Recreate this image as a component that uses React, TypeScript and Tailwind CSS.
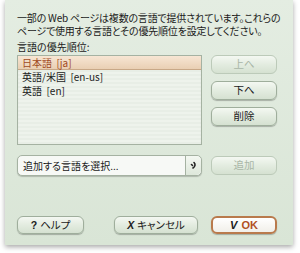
const jp = "font-['Lucida_Grande','Noto_Sans_CJK_JP',sans-serif] [font-feature-settings:'palt']";

const Btn = ({ label, disabled = false, w = "w-[66px]" }: { label: string; disabled?: boolean; w?: string }) => (
  <button
    className={`${w} h-[19px] rounded-[6px] border bg-gradient-to-b from-[#f4f8f2] via-[#e3ece0] to-[#d5e1d1] text-[10.5px] leading-none ${
      disabled ? "text-[#a9b6a7] border-[#bccab9]" : "text-[#1a1a1a] border-[#9fae9c] shadow-[0_1px_1px_rgba(0,0,0,0.25)]"
    }`}
  >
    {label}
  </button>
);

const rows = [
  { label: "日本語  [ja]", selected: true },
  { label: "英語/米国  [en-us]", selected: false },
  { label: "英語  [en]", selected: false },
];

export default function App() {
  return (
    <div className={`w-[300px] h-[253px] bg-white pl-[5px] pr-[7px] whitespace-nowrap ${jp}`}>
      <div className="h-[245px] bg-gradient-to-b from-[#e4ede2] to-[#d9e5d6] shadow-[0_2px_5px_rgba(0,0,0,0.35)] pl-[12px] pr-[15px] pt-[11px] flex flex-col">
        <p className="text-[10px] leading-[13px] tracking-[-0.2px] text-[#1a1a1a]">
          一部の Web ページは複数の言語で提供されています。これらの
          <br />
          ページで使用する言語とその優先順位を設定してください。
        </p>
        <p className="mt-[3px] text-[10px] leading-[13px] text-[#1a1a1a]">言語の優先順位:</p>
        <div className="mt-[2px] flex gap-[9px]">
          <div className="w-[185px] h-[90px] border border-[#a5b2a2] bg-[repeating-linear-gradient(#eef3ec_0px,#eef3ec_2px,#e8eee6_2px,#e8eee6_4px)] shadow-[inset_0_1px_1px_rgba(0,0,0,0.15)]">
            {rows.map((r) => (
              <div
                key={r.label}
                className={`h-[14px] pl-[4px] flex items-center text-[10px] leading-none whitespace-pre ${
                  r.selected
                    ? "bg-gradient-to-b from-[#f7e6d4] to-[#e9cfb3] text-[#a14a1e] border-b border-[#c8a887]"
                    : "text-[#1a1a1a]"
                }`}
              >
                {r.label}
              </div>
            ))}
          </div>
          <div className="flex flex-col gap-[7px]">
            <Btn label="上へ" disabled />
            <Btn label="下へ" />
            <Btn label="削除" />
          </div>
        </div>
        <div className="mt-[10px] flex gap-[9px] items-center">
          <div className="w-[185px] h-[21px] flex rounded-[5px] border border-[#a5b2a2] bg-[#f7f9f6] shadow-[0_1px_1px_rgba(0,0,0,0.2)]">
            <div className="flex-1 flex items-center pl-[5px] text-[10px] text-[#1a1a1a]">追加する言語を選択...</div>
            <div className="w-[16px] border-l border-[#a5b2a2] flex items-center justify-center bg-gradient-to-b from-[#f4f8f2] to-[#dde7da] rounded-r-[5px]">
              <svg width="9" height="10" viewBox="0 0 9 10">
                <path d="M5 1.5 C6.5 3 6.5 5.5 4 7" stroke="#222" strokeWidth="1.6" fill="none" strokeLinecap="round" />
                <path d="M2.5 3.5 L3.5 4.5" stroke="#222" strokeWidth="1.6" strokeLinecap="round" />
              </svg>
            </div>
          </div>
          <Btn label="追加" disabled />
        </div>
        <div className="mt-[40px] flex items-center">
          <button className="w-[67px] h-[18px] rounded-[6px] border border-[#9fae9c] bg-gradient-to-b from-[#f4f8f2] via-[#e3ece0] to-[#d5e1d1] shadow-[0_1px_1px_rgba(0,0,0,0.25)] text-[10.5px] leading-none text-[#1a1a1a]">
            <span className="font-bold font-['Liberation_Sans',sans-serif] mr-[3px]">?</span>ヘルプ
          </button>
          <button className="ml-[30px] w-[84px] h-[18px] rounded-[6px] border border-[#9fae9c] bg-gradient-to-b from-[#f4f8f2] via-[#e3ece0] to-[#d5e1d1] shadow-[0_1px_1px_rgba(0,0,0,0.25)] text-[10.5px] leading-none text-[#1a1a1a]">
            <span className="italic font-bold font-['Liberation_Sans',sans-serif] mr-[3px]">X</span>キャンセル
          </button>
          <button className="ml-[13px] w-[66px] h-[18px] rounded-[6px] border-2 border-[#b97a4c] bg-gradient-to-b from-[#ffffff] to-[#f1efe9] shadow-[0_1px_1px_rgba(0,0,0,0.25)] text-[11px] leading-none">
            <span className="italic font-bold font-['Liberation_Sans',sans-serif] text-[#1a1a1a] mr-[4px]">V</span>
            <span className="font-bold font-['Liberation_Sans',sans-serif] text-[#b1501f]">OK</span>
          </button>
        </div>
      </div>
    </div>
  );
}
